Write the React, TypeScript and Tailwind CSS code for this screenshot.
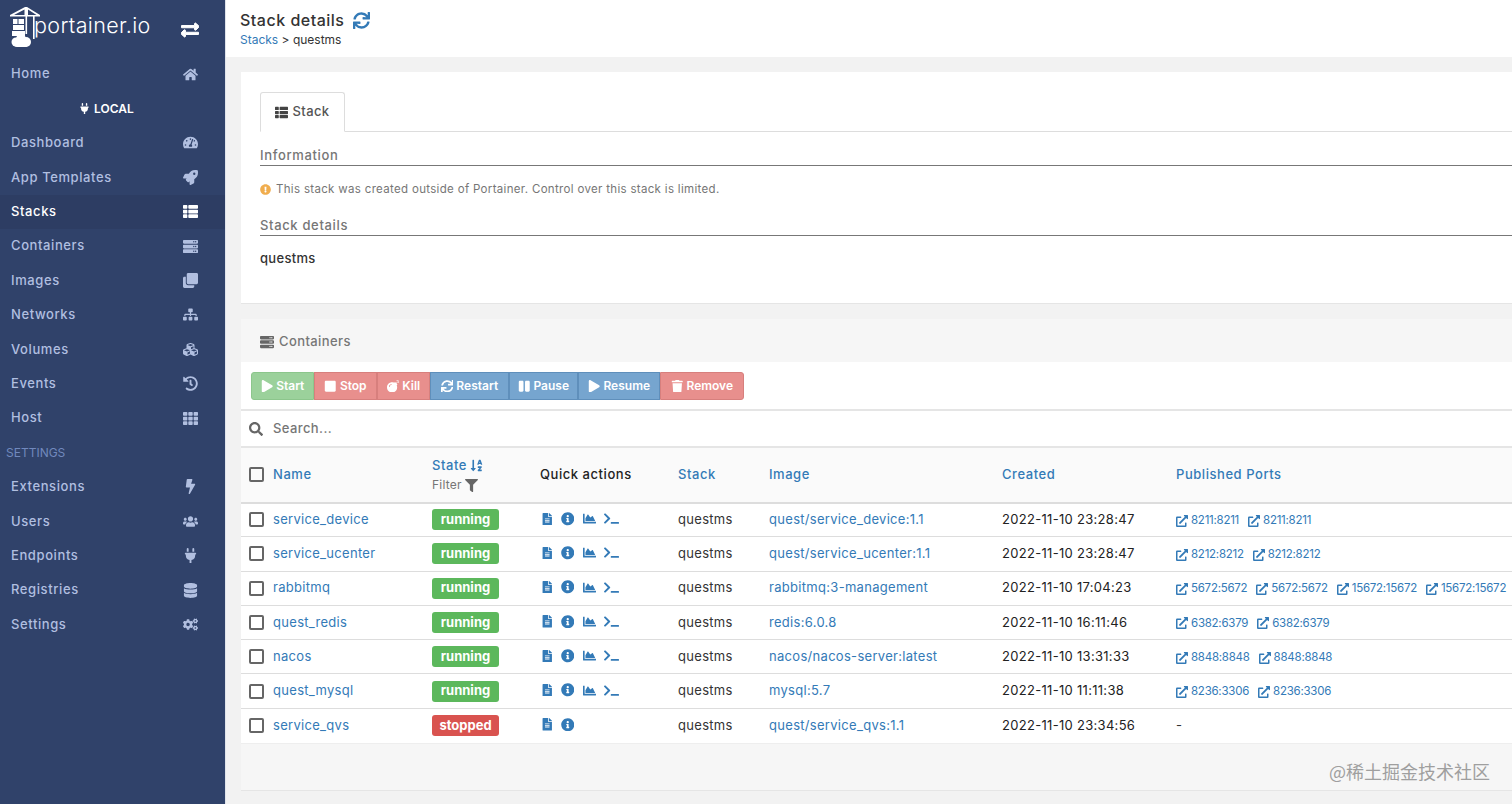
import type { ReactNode } from "react";
import {
  FaBolt,
  FaBomb,
  FaChartArea,
  FaClone,
  FaCogs,
  FaCubes,
  FaDatabase,
  FaExchangeAlt,
  FaExclamationCircle,
  FaExternalLinkAlt,
  FaFileAlt,
  FaFilter,
  FaHistory,
  FaHome,
  FaInfoCircle,
  FaPause,
  FaPlay,
  FaPlug,
  FaRocket,
  FaSearch,
  FaServer,
  FaSitemap,
  FaSortAlphaDown,
  FaStop,
  FaSync,
  FaTachometerAlt,
  FaTerminal,
  FaTh,
  FaThList,
  FaTrash,
  FaUsers,
} from "react-icons/fa";

const topNav = [
  { label: "Dashboard", icon: <FaTachometerAlt /> },
  { label: "App Templates", icon: <FaRocket /> },
  { label: "Stacks", icon: <FaThList />, active: true },
  { label: "Containers", icon: <FaServer /> },
  { label: "Images", icon: <FaClone /> },
  { label: "Networks", icon: <FaSitemap /> },
  { label: "Volumes", icon: <FaCubes /> },
  { label: "Events", icon: <FaHistory /> },
  { label: "Host", icon: <FaTh /> },
];

const settingsNav = [
  { label: "Extensions", icon: <FaBolt /> },
  { label: "Users", icon: <FaUsers /> },
  { label: "Endpoints", icon: <FaPlug /> },
  { label: "Registries", icon: <FaDatabase /> },
  { label: "Settings", icon: <FaCogs /> },
];

const actions = [
  { label: "Start", icon: <FaPlay />, color: "bg-[#9bd19b] border-[#8cc68c]", width: "w-[63px]" },
  { label: "Stop", icon: <FaStop />, color: "bg-[#e88f8d] border-[#d77f7d]", width: "w-[63px]" },
  { label: "Kill", icon: <FaBomb />, color: "bg-[#e88f8d] border-[#d77f7d]", width: "w-[53px]" },
  { label: "Restart", icon: <FaSync />, color: "bg-[#76a5cf] border-[#5f8fbb]", width: "w-[79px]" },
  { label: "Pause", icon: <FaPause />, color: "bg-[#76a5cf] border-[#5f8fbb]", width: "w-[69px]" },
  { label: "Resume", icon: <FaPlay />, color: "bg-[#76a5cf] border-[#5f8fbb]", width: "w-[82px]" },
  { label: "Remove", icon: <FaTrash />, color: "bg-[#e88f8d] border-[#d77f7d]", width: "w-[84px]" },
];

const rows = [
  { name: "service_device", state: "running", image: "quest/service_device:1.1", created: "2022-11-10 23:28:47", ports: ["8211:8211", "8211:8211"] },
  { name: "service_ucenter", state: "running", image: "quest/service_ucenter:1.1", created: "2022-11-10 23:28:47", ports: ["8212:8212", "8212:8212"] },
  { name: "rabbitmq", state: "running", image: "rabbitmq:3-management", created: "2022-11-10 17:04:23", ports: ["5672:5672", "5672:5672", "15672:15672", "15672:15672"] },
  { name: "quest_redis", state: "running", image: "redis:6.0.8", created: "2022-11-10 16:11:46", ports: ["6382:6379", "6382:6379"] },
  { name: "nacos", state: "running", image: "nacos/nacos-server:latest", created: "2022-11-10 13:31:33", ports: ["8848:8848", "8848:8848"] },
  { name: "quest_mysql", state: "running", image: "mysql:5.7", created: "2022-11-10 11:11:38", ports: ["8236:3306", "8236:3306"] },
  { name: "service_qvs", state: "stopped", image: "quest/service_qvs:1.1", created: "2022-11-10 23:34:56", ports: [] },
];

function NavRow({ label, icon, active }: { label: string; icon: ReactNode; active?: boolean }) {
  return (
    <div
      className={`flex h-[34.4px] items-center justify-between pl-[11px] pr-[27px] text-[13px] font-medium tracking-[0.6px] ${
        active ? "bg-[#2d3d63] font-bold text-white" : "text-[#b1bfe0]"
      }`}
    >
      <span>{label}</span>
      <span className={`flex w-[16px] justify-center text-[15px] ${active ? "text-white" : "text-[#b1bfe0]"}`}>{icon}</span>
    </div>
  );
}

function Logo() {
  return (
    <svg width="31" height="42" viewBox="0 0 31 42" className="shrink-0" fill="white">
      {/* crane */}
      <path d="M0 9 L15 1 L17 1 L30 9 V10.5 H0 Z M4 9 H14.5 V3.5 Z M18 3.5 V9 H26.5 Z" fillRule="evenodd" />
      <rect x="15.5" y="1" width="1.6" height="27" />
      <rect x="23" y="9" width="1.6" height="24" />
      {/* containers */}
      <rect x="3" y="13" width="4.5" height="5" />
      <rect x="8.5" y="13" width="5.5" height="5" />
      <rect x="3" y="19" width="11" height="5" />
      <rect x="2" y="25" width="13" height="5" />
      {/* cloud */}
      <circle cx="6" cy="36" r="4.5" />
      <circle cx="11" cy="33" r="5" />
      <circle cx="16" cy="36" r="5" />
      <rect x="4" y="35" width="14" height="6" rx="3" />
    </svg>
  );
}

function Sidebar() {
  return (
    <aside className="flex w-[226px] shrink-0 flex-col border-r border-[#dfe3ea] bg-[#30426a]">
      <div className="flex h-[57px] items-start justify-between pl-[10px] pr-[26px] pt-[6px]">
        <div className="flex items-start">
          <Logo />
          <span className="ml-[-7px] mt-[5px] text-[21.5px] font-light leading-[28px] tracking-[0.35px] text-white">portainer.io</span>
        </div>
        <FaExchangeAlt className="mt-[15px] text-[18px] text-white" stroke="currentColor" strokeWidth={28} />
      </div>
      <NavRow label="Home" icon={<FaHome />} />
      <div className="flex h-[34.4px] items-center gap-[4px] pl-[79px] text-[12px] font-semibold text-white">
        <FaPlug className="text-[11px]" />
        <span>LOCAL</span>
      </div>
      {topNav.map((item) => (
        <NavRow key={item.label} {...item} />
      ))}
      <div className="flex h-[34.4px] items-center pl-[6px] pt-[2px] text-[12px] text-[#7189bd]">SETTINGS</div>
      {settingsNav.map((item) => (
        <NavRow key={item.label} {...item} />
      ))}
    </aside>
  );
}

function SectionTitle({ children }: { children: ReactNode }) {
  return <div className="border-b border-[#777] py-[1px] text-[13px] font-medium leading-[18px] tracking-[0.65px] text-[#767676]">{children}</div>;
}

function Port({ value }: { value: string }) {
  return (
    <span className="mr-[9px] inline-flex items-center gap-[3px] whitespace-nowrap align-middle text-[11.5px] tracking-[-0.25px] text-[#337ab7]">
      <FaExternalLinkAlt className="text-[12px]" />
      {value}
    </span>
  );
}

function ContainerTable() {
  return (
    <table className="w-full table-fixed border-collapse text-[13px] tracking-[0.3px]">
      <colgroup>
        <col className="w-[191px]" />
        <col className="w-[108px]" />
        <col className="w-[138px]" />
        <col className="w-[91px]" />
        <col className="w-[233px]" />
        <col className="w-[174px]" />
        <col />
      </colgroup>
      <thead>
        <tr className="h-[54.5px] border-b-2 border-[#ddd] bg-[#fafafa] text-left font-medium tracking-[0.55px]">
          <th className="pl-[8px] font-medium">
            <div className="flex items-center">
              <span className="h-[15px] w-[15px] rounded-[2px] border-2 border-[#666]" />
              <span className="ml-[9px] text-[#337ab7]">Name</span>
            </div>
          </th>
          <th className="font-medium">
            <div className="flex items-center gap-[3px] text-[#337ab7]">
              State <FaSortAlphaDown className="text-[13px]" />
            </div>
            <div className="mt-[1px] flex items-center gap-[3px] text-[12px] font-normal tracking-[0.2px] text-[#767676]">
              Filter <FaFilter className="text-[13px] text-[#666]" />
            </div>
          </th>
          <th className="font-medium text-[#222]">Quick actions</th>
          <th className="font-medium text-[#337ab7]">Stack</th>
          <th className="font-medium text-[#337ab7]">Image</th>
          <th className="font-medium text-[#337ab7]">Created</th>
          <th className="font-medium text-[#337ab7]">Published Ports</th>
        </tr>
      </thead>
      <tbody>
        {rows.map((row) => (
          <tr key={row.name} className="h-[34.3px] border-b border-[#ddd] last:border-b-0">
            <td className="pl-[8px]">
              <div className="flex items-center">
                <span className="h-[15px] w-[15px] rounded-[2px] border-2 border-[#666]" />
                <span className="ml-[9px] text-[#337ab7]">{row.name}</span>
              </div>
            </td>
            <td>
              <span
                className={`inline-flex h-[21px] w-[67px] items-center justify-center rounded-[3px] text-[13px] font-bold tracking-normal text-white ${
                  row.state === "running" ? "bg-[#5cb85c]" : "bg-[#d9534f]"
                }`}
              >
                {row.state}
              </span>
            </td>
            <td>
              <div className="flex items-center pb-[2px] pl-[1px] text-[#337ab7]">
                <FaFileAlt className="text-[12.5px]" />
                <FaInfoCircle className="ml-[7px] text-[13.5px]" />
                {row.state === "running" && <FaChartArea className="ml-[9px] text-[13px]" />}
                {row.state === "running" && <FaTerminal className="ml-[8px] text-[15px]" />}
              </div>
            </td>
            <td className="text-[#333]">questms</td>
            <td className="text-[#337ab7]">{row.image}</td>
            <td className="text-[#222]">{row.created}</td>
            <td className="whitespace-nowrap text-[#333]">
              {row.ports.length === 0 ? "-" : row.ports.map((port, i) => <Port key={i} value={port} />)}
            </td>
          </tr>
        ))}
      </tbody>
    </table>
  );
}

export default function App() {
  return (
    <div
      className="relative flex h-[804px] w-[1512px] overflow-hidden bg-[#f2f2f2]"
      style={{ fontFamily: "Inter, 'Noto Sans', sans-serif" }}
    >
      <Sidebar />
      <main className="flex min-w-0 flex-1 flex-col">
        <header className="h-[57px] bg-white pl-[14px] pt-[10px]">
          <div className="flex items-center gap-[9px] text-[16px] font-medium leading-[20px] tracking-[0.5px] text-[#333]">
            Stack details
            <FaSync className="text-[17px] text-[#337ab7]" />
          </div>
          <div className="mt-[2px] text-[12px] leading-[16px] text-[#333]">
            <span className="text-[#337ab7]">Stacks</span> &gt; questms
          </div>
        </header>

        <div className="flex flex-1 flex-col gap-[15px] pl-[15px] pt-[15px]">
          <section className="h-[232px] border-b border-[#e5e5e5] bg-white pl-[19px] pt-[20px]">
            <div className="flex border-b border-[#ddd]">
              <div className="mb-[-1px] flex h-[40px] w-[85px] items-center justify-center gap-[4px] rounded-t-[3px] border border-[#ddd] border-b-white bg-white text-[13px] font-medium tracking-[0.4px] text-[#555]">
                <FaThList className="text-[13px] text-[#444]" />
                Stack
              </div>
            </div>
            <div className="mt-[13px]">
              <SectionTitle>Information</SectionTitle>
            </div>
            <div className="mt-[15px] flex items-center gap-[5px] text-[11.5px] tracking-[0.32px] text-[#767676]">
              <FaExclamationCircle className="text-[11px] text-[#f0ad4e]" />
              This stack was created outside of Portainer. Control over this stack is limited.
            </div>
            <div className="mt-[17px]">
              <SectionTitle>Stack details</SectionTitle>
            </div>
            <div className="mt-[13px] text-[13px] font-medium tracking-[0.3px] text-[#333]">questms</div>
          </section>

          <section className="h-[472px] border-b border-[#e5e5e5] bg-white">
            <div className="flex h-[43px] items-center gap-[5px] bg-[#f6f6f6] pl-[19px] pt-[3px] text-[13px] font-medium tracking-[0.4px] text-[#767676]">
              <FaServer className="text-[14px] text-[#666]" />
              Containers
            </div>
            <div className="flex h-[49px] items-center border-b-2 border-[#e5e5e5] pl-[10px] pt-[1px]">
              {actions.map((action, i) => (
                <div
                  key={action.label}
                  className={`flex h-[28px] items-center justify-center gap-[3px] border text-[12px] font-semibold text-white ${action.color} ${action.width} ${
                    i === 0 ? "rounded-l-[3px]" : ""
                  } ${i === actions.length - 1 ? "rounded-r-[3px]" : ""}`}
                >
                  <span className="text-[12.5px]">{action.icon}</span>
                  {action.label}
                </div>
              ))}
            </div>
            <div className="flex h-[37px] items-center gap-[10px] border-b-2 border-[#e5e5e5] pl-[8px] text-[13px] font-medium tracking-[0.4px] text-[#767676]">
              <FaSearch className="text-[14px] text-[#666]" />
              Search...
            </div>
            <ContainerTable />
            <div className="h-[47px] border-t border-[#eee] bg-[#f6f6f6]" />
          </section>
        </div>
      </main>
      <div
        className="absolute left-[1329px] top-[758px] text-[18px] text-[#9f9f9f]"
        style={{ fontFamily: "'Noto Sans CJK SC', sans-serif" }}
      >
        @稀土掘金技术社区
      </div>
    </div>
  );
}
